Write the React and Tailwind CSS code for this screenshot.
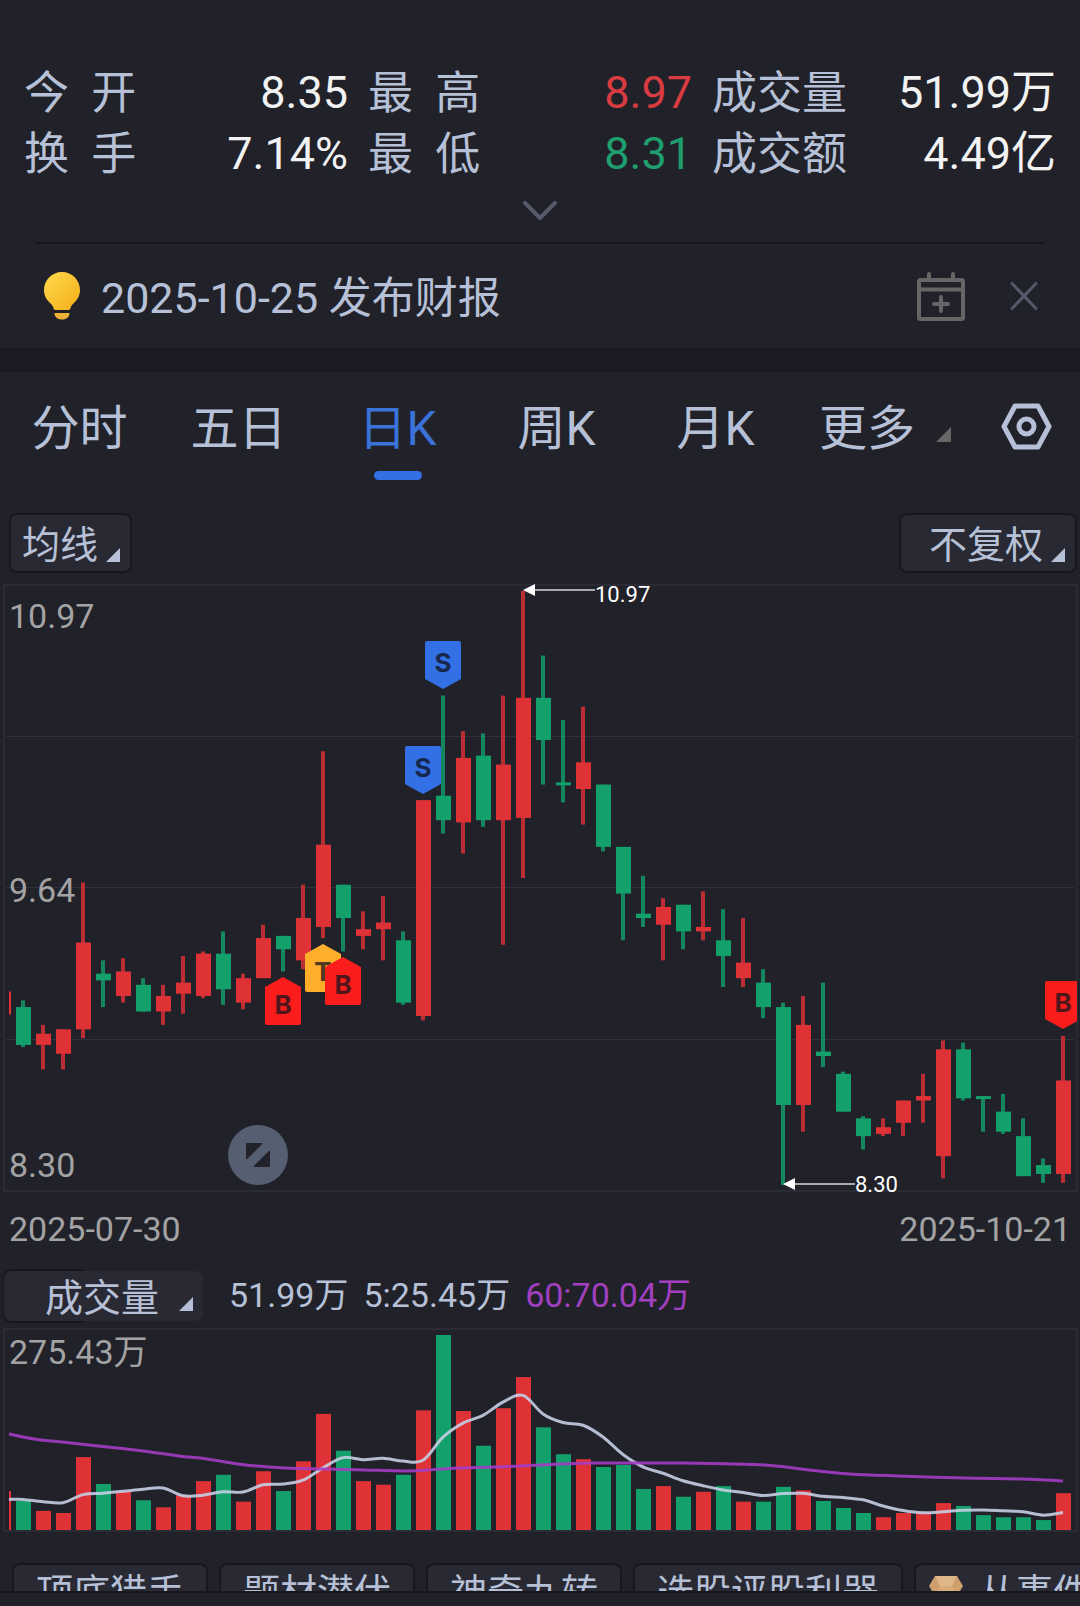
import { useState } from "react";
import clsx from "clsx";

const RED = "#df3237";
const GREEN = "#13a06b";

// open, close, high, low, volume (万)
const CANDLES = [
  [9.10, 8.93, 9.13, 8.92, 41],
  [8.93, 8.98, 9.02, 8.82, 27],
  [8.89, 9.00, 9.00, 8.82, 24],
  [9.00, 9.39, 9.66, 8.96, 103],
  [9.25, 9.22, 9.31, 9.10, 65],
  [9.15, 9.26, 9.32, 9.12, 54],
  [9.20, 9.08, 9.23, 9.08, 42],
  [9.08, 9.15, 9.20, 9.02, 32],
  [9.16, 9.21, 9.33, 9.07, 49],
  [9.15, 9.34, 9.35, 9.14, 69],
  [9.34, 9.18, 9.44, 9.11, 78],
  [9.12, 9.23, 9.25, 9.09, 40],
  [9.23, 9.41, 9.47, 9.23, 83],
  [9.42, 9.36, 9.42, 9.26, 55],
  [9.31, 9.50, 9.65, 9.27, 97],
  [9.46, 9.83, 10.25, 9.41, 164],
  [9.65, 9.50, 9.65, 9.35, 112],
  [9.42, 9.45, 9.53, 9.36, 69],
  [9.45, 9.48, 9.60, 9.31, 64],
  [9.40, 9.12, 9.44, 9.11, 78],
  [9.06, 10.03, 10.03, 9.04, 169],
  [10.05, 9.94, 10.50, 9.88, 275.43],
  [9.93, 10.22, 10.34, 9.79, 168],
  [10.23, 9.94, 10.33, 9.91, 119],
  [9.94, 10.19, 10.50, 9.38, 172],
  [9.95, 10.49, 10.97, 9.68, 216],
  [10.49, 10.30, 10.68, 10.10, 145],
  [10.11, 10.10, 10.39, 10.02, 107],
  [10.08, 10.20, 10.45, 9.92, 100],
  [10.10, 9.82, 10.10, 9.80, 89],
  [9.82, 9.61, 9.82, 9.40, 92],
  [9.52, 9.50, 9.69, 9.46, 58],
  [9.47, 9.55, 9.59, 9.31, 62],
  [9.56, 9.44, 9.56, 9.36, 47],
  [9.44, 9.46, 9.62, 9.40, 54],
  [9.40, 9.33, 9.54, 9.19, 62],
  [9.23, 9.30, 9.50, 9.19, 40],
  [9.21, 9.10, 9.27, 9.05, 40],
  [9.10, 8.66, 9.12, 8.30, 61],
  [8.66, 9.02, 9.15, 8.54, 56],
  [8.90, 8.88, 9.21, 8.83, 41],
  [8.80, 8.63, 8.81, 8.63, 31],
  [8.60, 8.52, 8.61, 8.46, 24],
  [8.53, 8.56, 8.60, 8.52, 18],
  [8.58, 8.68, 8.68, 8.52, 24],
  [8.68, 8.70, 8.80, 8.58, 25],
  [8.43, 8.91, 8.95, 8.33, 38],
  [8.91, 8.69, 8.94, 8.68, 34],
  [8.70, 8.69, 8.70, 8.54, 21],
  [8.63, 8.54, 8.71, 8.53, 18],
  [8.52, 8.34, 8.60, 8.34, 18],
  [8.39, 8.35, 8.42, 8.31, 14],
  [8.35, 8.77, 8.97, 8.31, 51.99],
];

// volumes of the days that lie left of the visible range
const EARLIER = [41, 43, 31, 46, 55];

const MA60 = [
  [9, 106], [34, 111], [62, 114], [98, 118], [143, 123], [179, 128], [207, 131],
  [246, 137], [286, 140], [325, 141], [365, 142], [410, 143], [427, 142], [458, 140],
  [496, 139], [540, 137], [561, 136], [595, 135], [678, 135], [733, 136], [764, 137],
  [786, 139], [809, 142], [850, 146], [898, 148], [964, 150], [1022, 151], [1063, 153],
];

const MARKERS = [
  { x: 443, y: 57, letter: "S", dir: "down", fill: "#3370e6", color: "#17284f" },
  { x: 423, y: 162, letter: "S", dir: "down", fill: "#3370e6", color: "#17284f" },
  { x: 283, y: 393, letter: "B", dir: "up", fill: "#fb1c1c", color: "#4f161b" },
  { x: 323, y: 360, letter: "T", dir: "up", fill: "#ffae2b", color: "#4d3a20" },
  { x: 343, y: 373, letter: "B", dir: "up", fill: "#fb1c1c", color: "#4f161b" },
  { x: 1063, y: 397, letter: "B", dir: "down", fill: "#fb1c1c", color: "#4f161b" },
];

const STATS = [
  { label: "今  开", value: "8.35" },
  { label: "最  高", value: "8.97", tone: "text-[#d83b40]" },
  { label: "成交量", value: "51.99万" },
  { label: "换  手", value: "7.14%" },
  { label: "最  低", value: "8.31", tone: "text-[#1f9e6e]" },
  { label: "成交额", value: "4.49亿" },
];

const PERIODS = ["分时", "五日", "日K", "周K", "月K"];
const STRATEGIES = ["顶底猎手", "题材潜伏", "神奇九转", "选股评股利器"];

const barX = (i) => 16 + i * 20;
const priceY = (p) => 7 + (10.97 - p) * 222.5;
const volumeY = (v) => 202 - (v / 275.43) * 195;

const smoothPath = (pts) => {
  let d = `M${pts[0][0]} ${pts[0][1]}`;
  for (let i = 0; i < pts.length - 1; i++) {
    const p0 = pts[i - 1] || pts[i];
    const p1 = pts[i];
    const p2 = pts[i + 1];
    const p3 = pts[i + 2] || p2;
    d += ` C${p1[0] + (p2[0] - p0[0]) / 6} ${p1[1] + (p2[1] - p0[1]) / 6} ${p2[0] - (p3[0] - p1[0]) / 6} ${p2[1] - (p3[1] - p1[1]) / 6} ${p2[0]} ${p2[1]}`;
  }
  return d;
};

const ma5Points = () => {
  const all = [...EARLIER, ...CANDLES.map((c) => c[4])];
  const pts = [];
  for (let i = 4; i < all.length; i++) {
    const avg = all.slice(i - 4, i + 1).reduce((a, b) => a + b, 0) / 5;
    pts.push([Math.max(9, barX(i - 5) + 7), volumeY(avg)]);
  }
  return pts;
};

const Corner = ({ className }) => (
  <svg className={className} viewBox="0 0 14 14" fill="currentColor" aria-hidden="true">
    <path d="M14 0v14H0z" />
  </svg>
);

const Stats = () => (
  <dl className="grid grid-cols-[324fr_324fr_344fr] gap-x-5 px-6 pt-[62px] text-[45px] leading-[61px]">
    {STATS.map((s) => (
      <div key={s.label} className="flex h-[61px] justify-between whitespace-pre">
        <dt className="pt-px">{s.label}</dt>
        <dd className={s.tone || "text-[#f2f2f2]"}>{s.value}</dd>
      </div>
    ))}
  </dl>
);

const Notice = () => (
  <div className="flex h-[104px] items-center pr-[42px] pl-[43px]">
    <svg className="h-[50px] w-[38px]" viewBox="0 0 38 50" aria-hidden="true">
      <defs>
        <linearGradient id="bulb" x1="0" y1="0" x2="1" y2="1">
          <stop offset="0%" stopColor="#ffd84d" />
          <stop offset="100%" stopColor="#f5b01a" />
        </linearGradient>
      </defs>
      <path fill="url(#bulb)" d="M19 1C9 1 1 9 1 19c0 6 3 10 6 13 2 2 3 3 3.500 5 .3 1.500 1 2 2 2h13c1 0 1.700-.5 2-2 .5-2 1.500-3 3.500-5 3-3 6-7 6-13C37 9 29 1 19 1z" />
      <path fill="#eeb236" d="M11.500 42h15c0 4-3 6.500-7.500 6.500s-7.500-2.500-7.500-6.500z" />
    </svg>
    <p className="ml-5 flex-1 pt-1 text-[43px] leading-[60px]">2025-10-25 发布财报</p>
    <button type="button" aria-label="添加到日历" className="text-[#666]">
      <svg className="h-[50px] w-[50px]" viewBox="0 0 50 50" fill="none" stroke="currentColor" strokeWidth="4" strokeLinecap="round">
        <rect x="3" y="9" width="44" height="39" rx="1.500" />
        <path d="M3 18.500h44M13 3v5M37 3v5M25 26v14M18 33h14" />
      </svg>
    </button>
    <button type="button" aria-label="关闭" className="ml-11 text-[#555b6b]">
      <svg className="h-[28px] w-[28px]" viewBox="0 0 28 28" fill="none" stroke="currentColor" strokeWidth="3" strokeLinecap="round">
        <path d="M2 1.500l24 25M26 1.500l-24 25" />
      </svg>
    </button>
  </div>
);

const PeriodTabs = () => {
  const [active, setActive] = useState("日K");
  return (
    <nav className="flex h-[110px] items-stretch text-[48px]">
      {PERIODS.map((p) => (
        <button
          key={p}
          type="button"
          onClick={() => setActive(p)}
          className={clsx("relative flex-1 pt-[3px]", active === p && "text-[#3a72d8]")}
        >
          {p}
          {active === p && (
            <span className="absolute bottom-0.5 left-1/2 h-[9px] w-12 -translate-x-1/2 rounded-full bg-[#3370e6]" />
          )}
        </button>
      ))}
      <button type="button" aria-haspopup="menu" className="flex w-[156px] items-center justify-between pt-[3px] pl-6">
        更多
        <Corner className="mt-3 h-[15px] w-[15px] text-[#666]" />
      </button>
      <button type="button" aria-label="图表设置" className="mr-7 ml-[49px]">
        <svg className="h-[50px] w-[52px]" viewBox="0 0 52 50" fill="none" stroke="currentColor" strokeWidth="5">
          <path strokeLinejoin="round" d="M15 4h23l11 20.500L38 45H15L4 24.500z" />
          <circle cx="26.500" cy="24.500" r="7.500" />
        </svg>
      </button>
    </nav>
  );
};

const Marker = ({ x, y, letter, dir, fill, color }) => (
  <g transform={`translate(${x - 18} ${y})`}>
    <path
      fill={fill}
      d={dir === "down" ? "M2 0h32q2 0 2 2v36L18 48 0 38V2q0-2 2-2z" : "M18 0l18 10v36q0 2-2 2H2q-2 0-2-2V10z"}
    />
    <text
      className="font-[Inter,Roboto,sans-serif]"
      x="18"
      y={dir === "down" ? 31 : 37}
      textAnchor="middle"
      fontSize="26"
      fontWeight="700"
      fill={color}
    >
      {letter}
    </text>
  </g>
);

const PriceChart = () => (
  <div className="relative">
    <svg className="block w-full overflow-visible" viewBox="0 0 1080 608" role="img" aria-label="日K线图">
      <defs>
        <clipPath id="frame">
          <rect x="4" y="0" width="1073" height="608" />
        </clipPath>
      </defs>
      <rect x="4" y="1" width="1073" height="606" fill="none" stroke="#2a2b34" strokeWidth="2" />
      <path d="M6 152.500h1068M6 303.500h1068M6 455.500h1068" stroke="#30313a" />
      <g fontSize="34" fill="#a3a3a3">
        <text x="9" y="44">10.97</text>
        <text x="9" y="318">9.64</text>
        <text x="9" y="593">8.30</text>
      </g>
      <rect x="9" y={priceY(9.17)} width="2" height="23" fill={RED} />
      {CANDLES.map(([open, close, high, low], i) => {
        const top = priceY(Math.max(open, close));
        return (
          <g key={i} fill={close >= open ? RED : GREEN}>
            <rect x={barX(i) + 5} y={priceY(high)} width="4" height={priceY(low) - priceY(high)} opacity="0.8" />
            <rect x={barX(i)} y={top} width="15" height={Math.max(3, priceY(Math.min(open, close)) - top)} />
          </g>
        );
      })}
      <g clipPath="url(#frame)">
        {MARKERS.map((m) => (
          <Marker key={m.x} {...m} />
        ))}
      </g>
      <path d="M534 6h61M794 600h61" stroke="#a9a9ae" strokeWidth="2" />
      <path d="M523 6l12-6v12zM783 600l12-6v12z" fill="#fff" />
      <g fontSize="22" fill="#fff">
        <text x="595" y="18">10.97</text>
        <text x="855" y="608">8.30</text>
      </g>
    </svg>
    <button
      type="button"
      aria-label="全屏"
      className="absolute bottom-[7px] left-[228px] flex size-[60px] items-center justify-center rounded-full bg-[#565f72] text-[#21222a]"
    >
      <svg className="size-6" viewBox="0 0 24 24" fill="currentColor">
        <path d="M1 0h15q1 .3 0 1.200L1.400 15.800Q0 17 0 15.500V1q0-1 1-1zM23 24H8q-1-.3 0-1.200L22.600 8.200Q24 7 24 8.500V23q0 1-1 1z" />
      </svg>
    </button>
  </div>
);

const VolumeChart = () => (
  <svg className="mt-[5px] block w-full" viewBox="0 0 1080 204" role="img" aria-label="成交量">
    <rect x="4" y="1" width="1073" height="202" fill="none" stroke="#2a2b34" strokeWidth="2" />
    <text x="9" y="36" fontSize="34" fill="#a3a3a3">275.43万</text>
    <rect x="9" y={volumeY(55)} width="2" height={202 - volumeY(55)} fill={RED} />
    {CANDLES.map(([open, close, , , volume], i) => (
      <rect
        key={i}
        x={barX(i)}
        y={volumeY(volume)}
        width="15"
        height={202 - volumeY(volume)}
        fill={close >= open ? RED : GREEN}
      />
    ))}
    <g fill="none" strokeWidth="3">
      <path d={smoothPath(ma5Points())} stroke="#c5cee4" opacity="0.9" />
      <path d={smoothPath(MA60)} stroke="#a43cc4" opacity="0.9" />
    </g>
  </svg>
);

export default function App() {
  return (
    <main className="min-h-screen overflow-hidden bg-[#21212a] font-[Roboto,'Noto_Sans_CJK_SC',sans-serif] text-[#b6c0d6]">
      <Stats />
      <button type="button" aria-label="展开" className="flex h-[58px] w-full items-center justify-center pb-[5px] text-[#555b6b]">
        <svg className="h-5 w-9" viewBox="0 0 36 20" fill="none" stroke="currentColor" strokeWidth="4" strokeLinecap="round" strokeLinejoin="round">
          <path d="M3 2l15 15L33 2" />
        </svg>
      </button>
      <hr className="mx-[35px] border-0 border-t-2 border-[#17181c]" />
      <Notice />
      <div className="h-6 bg-[#1b1b23]" />
      <PeriodTabs />

      <div className="mt-[31px] mb-[11px] flex justify-between pr-[3px] pl-[9px] text-[38px]">
        <button type="button" aria-haspopup="menu" className="flex h-[60px] items-center justify-between gap-2 rounded-lg border-2 border-[#17181d] bg-[#282933] pt-1 pr-2.5 pl-[11px]">
          均线
          <Corner className="mt-5 h-[14px] w-[14px]" />
        </button>
        <button type="button" aria-haspopup="menu" className="flex h-[60px] items-center justify-between gap-2 rounded-lg border-2 border-[#17181d] bg-[#282933] pt-1 pr-2.5 pl-7">
          不复权
          <Corner className="mt-5 h-[14px] w-[14px]" />
        </button>
      </div>

      <PriceChart />
      <div className="flex h-[77px] items-center justify-between px-[9px] pb-0.5 text-[34px] text-[#a3a3a3]">
        <time>2025-07-30</time>
        <time>2025-10-21</time>
      </div>

      <div className="flex h-[54px] items-center pl-[3px]">
        <button type="button" aria-haspopup="menu" className="relative flex h-full w-[200px] items-center py-0.5">
          <span className="absolute inset-y-0 left-0 w-[84px] rounded-lg border-2 border-r-0 border-[#17181d]" />
          <span className="relative ml-px flex h-[50px] flex-1 items-center justify-between rounded-lg bg-[#282933] pt-1 pr-2.5 pl-[41px] text-[38px]">
            成交量
            <Corner className="mt-3 h-[14px] w-[14px]" />
          </span>
        </button>
        <div className="ml-[26px] flex gap-[15px] pb-0.5 text-[34px] leading-[50px]">
          <span>51.99万</span>
          <span>5:25.45万</span>
          <span className="text-[#a03fbf]">60:70.04万</span>
        </div>
      </div>
      <VolumeChart />

      <div className="mt-[31px] flex h-7 gap-[11px] overflow-hidden pl-3 text-[37px] whitespace-nowrap">
        {STRATEGIES.map((s) => (
          <button key={s} type="button" className="h-[62px] shrink-0 rounded-lg border-2 border-[#17181d] bg-[#282933] px-[22px]">
            {s}
          </button>
        ))}
        <button type="button" className="flex h-[62px] shrink-0 items-center gap-4 rounded-lg border-2 border-[#17181d] bg-[#282933] px-[13px]">
          <svg className="h-9 w-[34px]" viewBox="0 0 34 36" aria-hidden="true">
            <path fill="#cf9f6c" d="M6 0h22l6 10-6 10-11 12L6 20 0 10z" />
            <path fill="#dfb687" d="M6 0h22l-5 10H11z" />
            <path fill="#d9ac7b" d="M11 10h12l5 10H6z" />
          </svg>
          从事件
        </button>
      </div>
      <div className="h-[15px] border-t-2 border-[#17181d]" />
    </main>
  );
}
